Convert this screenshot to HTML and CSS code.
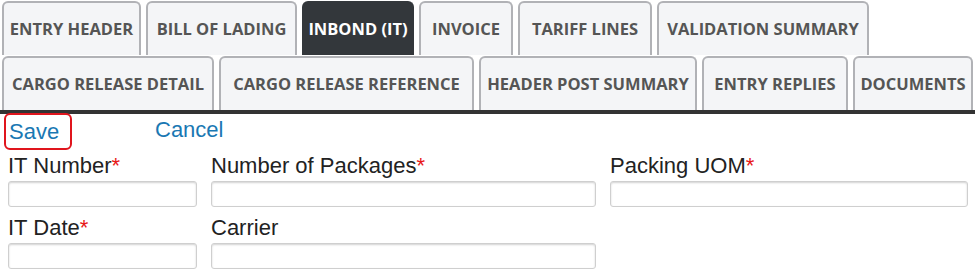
FILE: index.html
```html
<!DOCTYPE html>
<html lang="en">
<head>
    <meta charset="UTF-8">
    <meta name="viewport" content="width=device-width, initial-scale=1.0">
    <title>Inbond (IT)</title>
    <link rel="stylesheet" href="styles.css">
</head>
<body>
    <div class="tabs">
        <div class="tab-row">
            <div class="tab tab-header">ENTRY HEADER</div>
            <div class="tab tab-bol">BILL OF LADING</div>
            <div class="tab tab-inbond tab-active">INBOND (IT)</div>
            <div class="tab tab-invoice">INVOICE</div>
            <div class="tab tab-tariff">TARIFF LINES</div>
            <div class="tab tab-validation">VALIDATION SUMMARY</div>
        </div>
        <div class="tab-row">
            <div class="tab tab-crd">CARGO RELEASE DETAIL</div>
            <div class="tab tab-crr">CARGO RELEASE REFERENCE</div>
            <div class="tab tab-hps">HEADER POST SUMMARY</div>
            <div class="tab tab-replies">ENTRY REPLIES</div>
            <div class="tab tab-docs">DOCUMENTS</div>
        </div>
    </div>

    <div class="actions">
        <a class="link link-save" href="#">Save</a>
        <a class="link" href="#">Cancel</a>
    </div>

    <div class="form">
        <div class="field">
            <label>IT Number<span class="req">*</span></label>
            <input type="text">
        </div>
        <div class="field">
            <label>Number of Packages<span class="req">*</span></label>
            <input type="text">
        </div>
        <div class="field">
            <label>Packing UOM<span class="req">*</span></label>
            <input type="text">
        </div>
        <div class="field">
            <label>IT Date<span class="req">*</span></label>
            <input type="text">
        </div>
        <div class="field">
            <label>Carrier</label>
            <input type="text">
        </div>
    </div>
</body>
</html>
```

FILE: styles.css
```css
* {
    margin: 0;
    padding: 0;
    box-sizing: border-box;
}

body {
    background: #fff;
    font-family: Arial, "Liberation Sans", sans-serif;
    color: #222;
}

/* Tabs */
.tabs {
    padding: 1px 1px 0 2px;
    border-bottom: 4px solid #333;
}

.tab-row {
    display: flex;
    gap: 5px;
}

    .tab-row + .tab-row {
        margin-top: 1px;
    }

.tab {
    flex: none;
    height: 54px;
    padding-bottom: 1px;
    display: flex;
    align-items: center;
    justify-content: center;
    border: 2px solid #b1b2b6;
    border-bottom: none;
    border-radius: 6px 6px 0 0;
    background: #f4f5f7;
    color: #555;
    font-family: "Open Sans", sans-serif;
    font-weight: 700;
    font-size: 16.5px;
    white-space: nowrap;
}

.tab-active {
    background: #33373b;
    border-color: #33373b;
    color: #fff;
}

.tab-header { width: 139px; }
.tab-bol { width: 151px; }
.tab-inbond { width: 112px; }
.tab-invoice { width: 94px; }
.tab-tariff { width: 134px; }
.tab-validation { width: 212px; }
.tab-crd { width: 212px; }
.tab-crr { width: 255px; }
.tab-hps { width: 218px; }
.tab-replies { width: 146px; }
.tab-docs { width: 120px; }

/* Save / Cancel */
.actions {
    display: flex;
    align-items: flex-start;
    height: 37px;
    padding-left: 4px;
    margin-top: -1px;
}

.link {
    color: #1a78b3;
    text-decoration: none;
    font-size: 22px;
    line-height: 26px;
    padding-top: 4px;
}

.link-save {
    width: 68px;
    height: 37px;
    padding: 4px 0 0 3px;
    border: 2px solid #e0151d;
    border-radius: 6px;
    margin-right: 83px;
}

/* Form */
.form {
    display: grid;
    grid-template-columns: 189px 385px 358px;
    column-gap: 14px;
    row-gap: 9px;
    padding: 4px 0 0 8px;
}

.field label {
    display: block;
    font-size: 22px;
    line-height: 24px;
    height: 27px;
}

.req {
    color: #e81818;
}

.field input {
    display: block;
    width: 100%;
    height: 26px;
    border: 1px solid #cfcfcf;
    border-radius: 3px;
    box-shadow: inset 0 1px 2px rgba(0, 0, 0, 0.18);
    background: #fff;
}
```
